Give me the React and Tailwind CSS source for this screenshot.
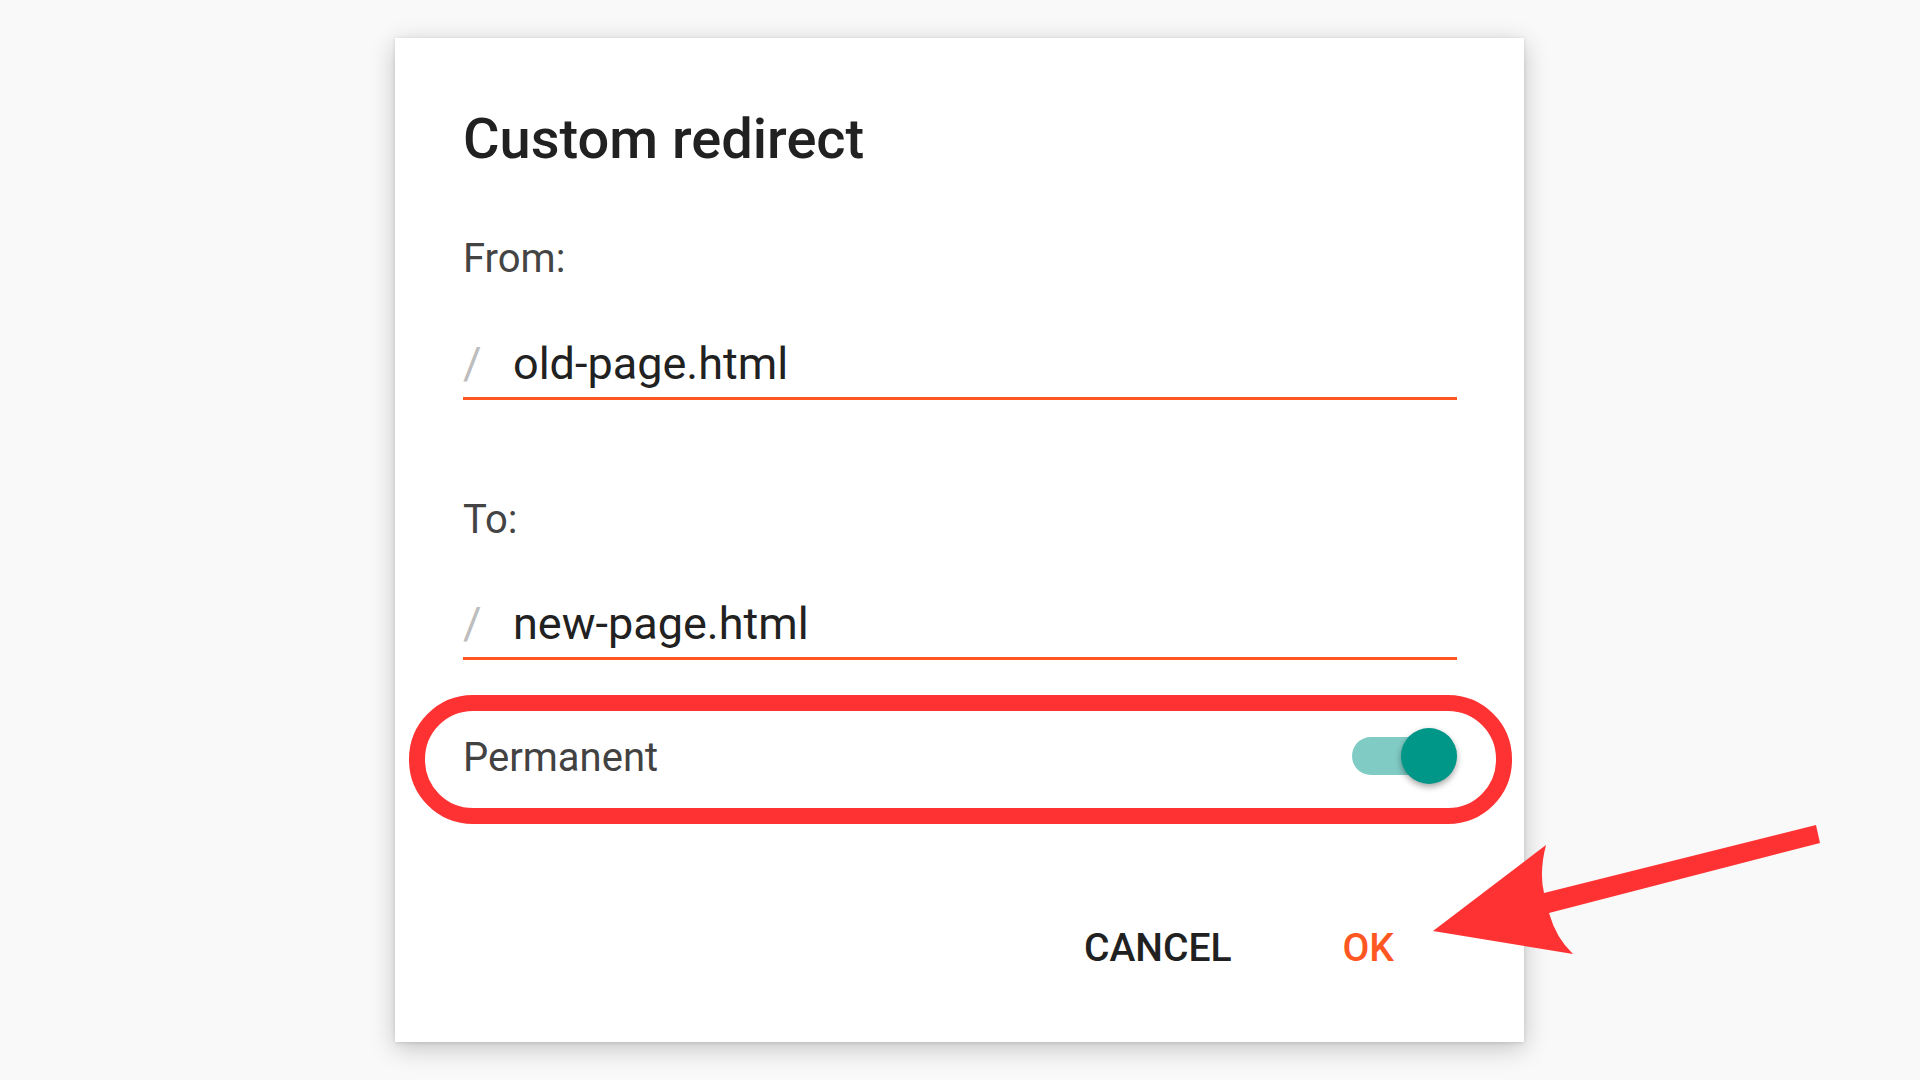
import React from "react";

function Field({ label, value, labelGap, first }) {
  return (
    <div className={first ? "mt-[72px]" : "mt-[100px]"}>
      <div className="text-[40px] leading-none text-[#444444]">{label}</div>
      <div className={`${labelGap} flex items-baseline pb-[11px] border-b-[3px] border-[#ff5722]`}>
        <span className="w-[50px] text-[45px] leading-none text-[#bdbdbd]">/</span>
        <span className="text-[45px] leading-none text-[#212121]">{value}</span>
      </div>
    </div>
  );
}

export default function App() {
  return (
    <div className="relative w-[1920px] h-[1080px] overflow-hidden bg-[#f9f9f9] font-['Roboto',sans-serif]">
      <div className="pt-[38px] pl-[395px]">
        <div className="w-[1129px] h-[1004px] bg-white pl-[68px] pr-[67px] pt-[73px] shadow-[0_6px_24px_rgba(0,0,0,0.22),0_1px_4px_rgba(0,0,0,0.12)]">
          <h1 className="text-[56px] leading-none font-medium text-[#212121]">Custom redirect</h1>

          <Field first label="From:" value="old-page.html" labelGap="mt-[62px]" />
          <Field label="To:" value="new-page.html" labelGap="mt-[61px]" />

          <div className="relative mt-[68px] flex h-[56px] items-center justify-between">
            <span className="pt-[4px] text-[40px] leading-none text-[#424242]">Permanent</span>
            <div className="relative w-[105px] h-[56px]">
              <div className="absolute left-0 top-[9px] w-[92px] h-[38px] rounded-full bg-[#80cbc4]" />
              <div className="absolute right-0 top-0 w-[56px] h-[56px] rounded-full bg-[#009688] shadow-[0_3px_6px_rgba(0,0,0,0.35)]" />
            </div>
            <div className="pointer-events-none absolute -left-[54px] -right-[55px] -top-[33px] -bottom-[40px] rounded-[64px] border-[16px] border-[#fe3232]" />
          </div>

          <div className="mt-[145px] flex justify-end gap-[111px] pr-[63px]">
            <button className="text-[39px] leading-none font-medium text-[#212121]">CANCEL</button>
            <button className="text-[39px] leading-none font-medium text-[#ff5722]">OK</button>
          </div>
        </div>
      </div>

      <svg
        className="pointer-events-none absolute left-0 top-0"
        width="1920"
        height="1080"
        viewBox="0 0 1920 1080"
      >
        <path
          d="M1433,931 L1546,845 Q1539,872 1544,893 L1816,825 L1820,843 L1549,913 Q1556,938 1573,954 Z"
          fill="#fe3232"
        />
      </svg>
    </div>
  );
}
